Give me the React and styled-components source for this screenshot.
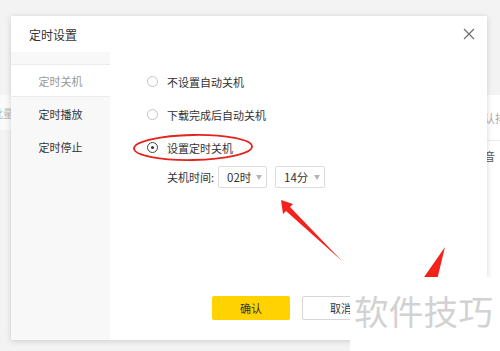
import React from 'react';
import styled, { createGlobalStyle } from 'styled-components';

const GlobalStyle = createGlobalStyle`
  html, body {
    margin: 0;
    padding: 0;
    background: #f3f3f3;
    font-family: "Microsoft YaHei", "Noto Sans CJK SC", "Noto Sans", sans-serif;
  }
`;

const Page = styled.div`
  position: relative;
  width: 500px;
  height: 351px;
  overflow: hidden;
  display: grid;
  grid-template-columns: 11px 476px 13px;
  padding-top: 16px;
  box-sizing: border-box;
`;

const BackLeft = styled.div`
  padding-top: 79px;
  overflow: hidden;
`;

const BackBand = styled.div`
  height: 35px;
  background: #fafafa;
  display: flex;
  align-items: center;
  justify-content: flex-end;
  font-size: 11px;
  color: #bbb;
  white-space: nowrap;
  margin-right: -3px;
`;

const BackRight = styled.div`
  margin-top: 79px;
  background: #fff;
  overflow: hidden;
`;

const BackRow = styled.div`
  height: ${p => p.$h}px;
  display: flex;
  align-items: center;
  white-space: nowrap;
  font-size: 11px;
  color: ${p => p.$muted ? '#aaa' : '#555'};
  margin-left: -3px;
  border-bottom: ${p => p.$line ? '1px solid #ececec' : 'none'};
`;

const Dialog = styled.div`
  position: relative;
  z-index: 1;
  height: 324px;
  background: #fff;
  box-shadow: 0 1px 6px rgba(0, 0, 0, 0.16);
  display: flex;
  flex-direction: column;
`;

const Header = styled.div`
  height: 36px;
  flex: none;
  display: flex;
  align-items: center;
  justify-content: space-between;
  padding: 0 12px 0 18px;
  font-size: 12px;
  color: #333;
`;

const Body = styled.div`
  flex: 1;
  display: flex;
`;

const Sidebar = styled.ul`
  width: 99px;
  flex: none;
  margin: 0;
  padding: 12px 0 0;
  list-style: none;
  background: #f8f8f8;
`;

const SideItem = styled.li`
  height: 33px;
  display: flex;
  align-items: center;
  justify-content: center;
  box-sizing: border-box;
  font-size: 11px;
  color: ${p => p.$active ? '#999' : '#333'};
  background: ${p => p.$active ? '#fff' : 'transparent'};
  border-top: ${p => p.$active ? '1px solid #ebebeb' : 'none'};
  border-bottom: ${p => p.$active ? '1px solid #ebebeb' : 'none'};
`;

const Main = styled.div`
  flex: 1;
  display: flex;
  flex-direction: column;
  padding: 13px 0 20px 37px;
`;

const Option = styled.label`
  height: 33px;
  display: flex;
  align-items: center;
  gap: 9px;
  font-size: 11px;
  color: #333;
`;

const Radio = styled.span`
  width: 11px;
  height: 11px;
  box-sizing: border-box;
  border-radius: 50%;
  border: 1px solid ${p => p.$checked ? '#444' : '#c4c4c4'};
  display: flex;
  align-items: center;
  justify-content: center;

  &::after {
    content: '';
    width: 3px;
    height: 3px;
    border-radius: 50%;
    background: ${p => p.$checked ? '#333' : 'transparent'};
  }
`;

const TimeRow = styled.div`
  margin-top: 2px;
  padding-left: 20px;
  display: flex;
  align-items: center;
  gap: 4px;
  font-size: 11px;
  color: #333;
`;

const Select = styled.div`
  width: ${p => p.$w}px;
  height: 22px;
  box-sizing: border-box;
  border: 1px solid #dcdcdc;
  border-radius: 2px;
  display: flex;
  align-items: center;
  justify-content: space-between;
  padding: 0 4px 0 8px;
  font-size: 11.5px;
  color: #333;

  &::after {
    content: '';
    border-left: 3.5px solid transparent;
    border-right: 3.5px solid transparent;
    border-top: 5px solid #b5b5b5;
  }
`;

const Selects = styled.div`
  display: flex;
  gap: 8px;
`;

const Footer = styled.div`
  margin: auto 0 0 -37px;
  display: flex;
  justify-content: center;
  gap: 12px;
  padding-right: 5px;
`;

const Button = styled.button`
  width: 78px;
  height: 24px;
  border-radius: 2px;
  font-family: inherit;
  font-size: 11px;
  color: #333;
  background: ${p => p.$primary ? '#ffd200' : '#fff'};
  border: 1px solid ${p => p.$primary ? '#ffd200' : '#d6d6d6'};
  padding: 0;
`;

const Overlay = styled.svg`
  position: absolute;
  left: 0;
  top: 0;
  z-index: 2;
  pointer-events: none;
`;

const Watermark = styled.div`
  position: absolute;
  left: 350px;
  top: 277px;
  z-index: 3;
  width: 150px;
  height: 74px;
  background: #fff;
  box-sizing: border-box;
  padding: 13px 0 0 4px;
  font-size: 34.5px;
  line-height: 40px;
  color: #d2d2d2;
  white-space: nowrap;
  letter-spacing: 0.3px;
`;

const CloseIcon = () => (
  <svg width="12" height="12" viewBox="0 0 12 12">
    <path d="M1 1 L11 11 M11 1 L1 11" stroke="#6f6f6f" strokeWidth="1.2" fill="none" />
  </svg>
);

export default function App() {
  return (
    <>
      <GlobalStyle />
      <Page>
        <BackLeft>
          <BackBand>批量</BackBand>
        </BackLeft>

        <Dialog>
          <Header>
            <span>定时设置</span>
            <CloseIcon />
          </Header>
          <Body>
            <Sidebar>
              <SideItem $active>定时关机</SideItem>
              <SideItem>定时播放</SideItem>
              <SideItem>定时停止</SideItem>
            </Sidebar>
            <Main>
              <Option><Radio />不设置自动关机</Option>
              <Option><Radio />下载完成后自动关机</Option>
              <Option><Radio $checked />设置定时关机</Option>
              <TimeRow>
                <span>关机时间:</span>
                <Selects>
                  <Select $w={49}>02时</Select>
                  <Select $w={50}>14分</Select>
                </Selects>
              </TimeRow>
              <Footer>
                <Button $primary>确认</Button>
                <Button>取消</Button>
              </Footer>
            </Main>
          </Body>
        </Dialog>

        <BackRight>
          <BackRow $h={45} $muted $line>认排</BackRow>
          <BackRow $h={30}>音</BackRow>
        </BackRight>

        <Overlay width="500" height="351" viewBox="0 0 500 351">
          <ellipse cx="193" cy="147.5" rx="59" ry="12.5" fill="none" stroke="#e3231c" strokeWidth="1.8" transform="rotate(-1 193 147.5)" />
          <polygon points="281,200 293,204 290,207 342,261 286,211 283,214" fill="#f5221b" />
          <polygon points="445,247 437,280 422,280" fill="#f5221b" />
        </Overlay>
        <Watermark>软件技巧</Watermark>
      </Page>
    </>
  );
}
